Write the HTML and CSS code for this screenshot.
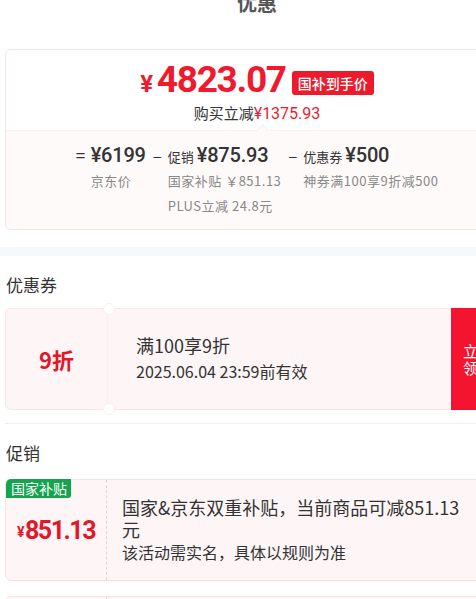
FILE: index.html
```html
<!DOCTYPE html>
<html lang="zh-CN">
<head>
<meta charset="utf-8">
<title>优惠</title>
<link rel="stylesheet" href="styles.css">
</head>
<body>
<div class="page">
  <div class="title">优惠</div>

  <div class="card summary">
    <div class="final">
      <span class="final-price"><span class="final-yen">¥</span>4823.07</span>
      <span class="tag-red">国补到手价</span>
    </div>
    <div class="saving">购买立减<span class="red num">¥1375.93</span></div>
    <div class="breakdown">
      <div class="col">
        <span class="op">=</span>
        <div class="col-body">
          <div class="val"><span class="num">¥6199</span></div>
          <div class="note">京东价</div>
        </div>
      </div>
      <div class="col">
        <span class="op">–</span>
        <div class="col-body">
          <div class="val"><span class="val-label">促销</span><span class="num">¥875.93</span></div>
          <div class="note">国家补贴 ￥851.13</div>
          <div class="note">PLUS立减 24.8元</div>
        </div>
      </div>
      <div class="col">
        <span class="op">–</span>
        <div class="col-body">
          <div class="val"><span class="val-label">优惠券</span><span class="num">¥500</span></div>
          <div class="note">神券满100享9折减500</div>
        </div>
      </div>
    </div>
  </div>

  <div class="band"></div>

  <h2 class="sec-title">优惠券</h2>
  <div class="coupon">
    <div class="coupon-left">9折</div>
    <div class="coupon-main">
      <div class="coupon-name">满100享9折</div>
      <div class="coupon-date">2025.06.04 23:59前有效</div>
    </div>
    <div class="coupon-btn">立<br>领</div>
  </div>

  <div class="divider"></div>

  <h2 class="sec-title">促销</h2>
  <div class="promo">
    <span class="tag-green">国家补贴</span>
    <div class="promo-left"><span class="promo-yen">¥</span>851.13</div>
    <div class="promo-main">
      <div class="promo-text">国家&amp;京东双重补贴，当前商品可减851.13元</div>
      <div class="promo-sub">该活动需实名，具体以规则为准</div>
    </div>
  </div>
  <div class="promo">
    <div class="promo-left"></div>
    <div class="promo-main"></div>
  </div>
</div>
</body>
</html>
```

FILE: styles.css
```css
* { box-sizing: border-box; }
html, body {
  margin: 0;
  padding: 0;
  background: #fff;
  overflow: hidden;
}
body {
  font-family: "Noto Sans CJK SC", "Noto Sans", sans-serif;
  color: #333;
}
.page {
  width: 514px;
  padding-left: 5px;
  padding-right: 5px;
}
.num {
  font-family: Roboto, "Noto Sans", sans-serif;
}
.red { color: #ef1a2d; }

.title {
  margin-top: -11px;
  height: 28px;
  line-height: 28px;
  text-align: center;
  font-size: 20px;
  font-weight: 700;
  color: #555;
}

.card {
  border: 1px solid #f6e4e4;
  border-radius: 6px;
  background: #fff;
}
.summary {
  margin-top: 32px;
  padding-top: 11px;
  overflow: hidden;
}
.final {
  height: 42px;
  display: flex;
  align-items: center;
  justify-content: center;
  gap: 6px;
}
.final-price {
  font-family: Roboto, "Noto Sans", sans-serif;
  font-weight: 700;
  font-size: 37px;
  letter-spacing: -1.3px;
  color: #ef1a2d;
  line-height: 42px;
}
.final-yen {
  font-size: 24px;
  margin-right: 5px;
}
.tag-red {
  background: #ec1a2b;
  color: #fff;
  font-size: 14px;
  font-weight: 500;
  line-height: 24px;
  padding: 0 6px;
  border-radius: 3px;
  margin-top: 2px;
}
.saving {
  height: 20px;
  line-height: 20px;
  text-align: center;
  font-size: 15px;
  color: #333;
}
.saving .num { font-size: 16px; }

.breakdown {
  position: relative;
  margin-top: 7px;
  background: #fffafa;
  border-top: 1px solid #fbeeee;
  padding: 11px 0 11px;
  display: flex;
  justify-content: center;
  gap: 7px;
}
.breakdown::before {
  content: "";
  position: absolute;
  top: -5px;
  left: 252px;
  width: 8px;
  height: 8px;
  background: #fffafa;
  border-top: 1px solid #fbeeee;
  border-left: 1px solid #fbeeee;
  transform: rotate(45deg);
}
.col {
  display: flex;
  align-items: flex-start;
}
.op {
  width: 15px;
  line-height: 26px;
  font-size: 17px;
  color: #333;
}
.col-body {
  display: flex;
  flex-direction: column;
}
.val {
  line-height: 26px;
  height: 26px;
  white-space: nowrap;
  color: #333;
}
.val .num {
  font-size: 20px;
  font-weight: 500;
  letter-spacing: -0.2px;
}
.val-label {
  font-size: 13px;
  margin-right: 3px;
}
.note {
  font-size: 13px;
  line-height: 25px;
  letter-spacing: 0.5px;
  color: #888;
  white-space: nowrap;
}

.band {
  margin: 17px -5px 0;
  height: 9px;
  background: #f7f8fa;
}

.sec-title {
  margin: 17px 0 0 1px;
  font-size: 17px;
  font-weight: 400;
  line-height: 24px;
  color: #333;
}

.coupon {
  position: relative;
  margin-top: 11px;
  height: 102px;
  display: flex;
  background: #fdf5f6;
  border: 1px solid #f7e6e7;
  border-radius: 6px;
}
.coupon::before,
.coupon::after {
  content: "";
  position: absolute;
  left: 97px;
  width: 10px;
  height: 10px;
  border-radius: 50%;
  background: #fff;
  border: 1px solid #faf0f0;
}
.coupon::before { top: -6px; }
.coupon::after { bottom: -6px; }
.coupon-left {
  width: 102px;
  display: flex;
  align-items: center;
  justify-content: center;
  font-size: 22px;
  font-weight: 700;
  color: #e3172a;
  border-right: 1px solid #faeeee;
}
.coupon-main {
  flex: 1;
  display: flex;
  flex-direction: column;
  justify-content: center;
  padding-left: 28px;
  padding-bottom: 2px;
}
.coupon-name {
  font-size: 18px;
  line-height: 26px;
  color: #333;
}
.coupon-date {
  font-size: 16px;
  line-height: 26px;
  color: #333;
}
.coupon-btn {
  width: 58px;
  margin: -1px -1px -1px 0;
  background: #f5142f;
  color: #fff;
  font-size: 15px;
  line-height: 17px;
  padding-left: 12px;
  display: flex;
  flex-direction: column;
  justify-content: center;
  border-radius: 0 6px 6px 0;
}

.divider {
  margin-top: 13px;
  height: 1px;
  background: #efefef;
}

.promo {
  position: relative;
  margin-top: 14px;
  height: 102px;
  display: flex;
  background: #fdf5f6;
  border: 1px solid #f7e2e4;
  border-radius: 6px;
}
.promo + .promo { margin-top: 15px; }
.tag-green {
  position: absolute;
  top: -1px;
  left: 0;
  background: #14a44d;
  color: #fff;
  font-size: 14px;
  line-height: 19px;
  padding: 0 4px 0 5px;
  border-radius: 5px 0 3px 0;
}
.promo-left {
  width: 101px;
  border-right: 1px dashed #e6d3d5;
  display: flex;
  align-items: center;
  justify-content: center;
  padding-top: 0;
  font-family: Roboto, "Noto Sans", sans-serif;
  font-weight: 700;
  font-size: 25px;
  letter-spacing: -1.5px;
  color: #e3172a;
}
.promo-yen {
  font-size: 14px;
  margin-right: 2px;
  margin-top: 4px;
}
.promo-main {
  flex: 1;
  display: flex;
  flex-direction: column;
  justify-content: center;
  padding-left: 15px;
  padding-right: 36px;
}
.promo-text {
  font-size: 18px;
  line-height: 22px;
  color: #333;
}
.promo-sub {
  font-size: 16px;
  line-height: 24px;
  color: #333;
}
```
